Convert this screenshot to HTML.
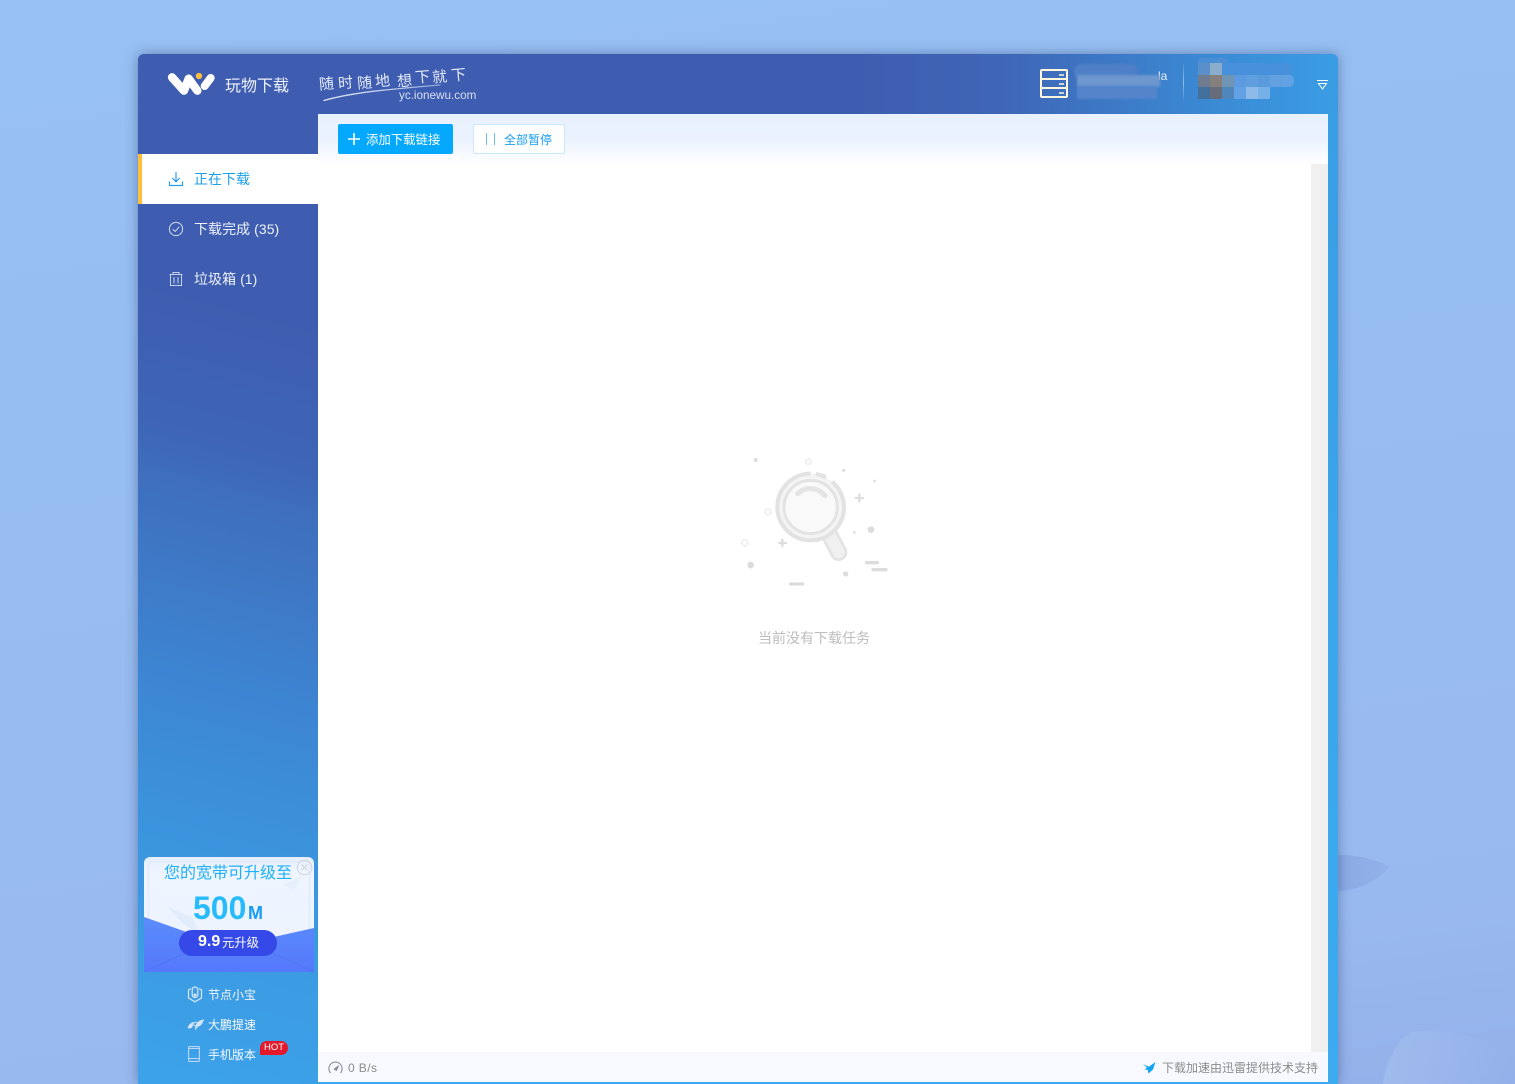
<!DOCTYPE html>
<html lang="zh">
<head>
<meta charset="utf-8">
<title>玩物下载</title>
<style>
html,body{margin:0;padding:0;width:1515px;height:1084px;overflow:hidden}
body{position:relative;background:linear-gradient(172deg,#97c0f3 0%,#97bdf1 45%,#98b9ef 85%,#94b0ea 100%);font-family:"Liberation Sans","Noto Sans CJK SC",sans-serif;color:#fff}
.a{position:absolute;white-space:nowrap}
svg{position:absolute;display:block;overflow:visible}
#win{left:138px;top:54px;width:1200px;height:1030px;border-radius:6px 6px 0 0;background:#3ca8ee;box-shadow:0 0 12px rgba(50,70,120,.5);overflow:hidden}
.t{line-height:20px;height:20px}
.b{filter:blur(1px)}
.m{position:absolute;width:12px;height:12px}
</style>
</head>
<body>
<!-- background decoration -->
<svg style="left:0;top:0" width="1515" height="1084" viewBox="0 0 1515 1084">
  <defs>
    <linearGradient id="lf" x1="0" y1="0" x2="1" y2="0"><stop offset="0" stop-color="#8aa8e4"/><stop offset="1" stop-color="#93b2ea"/></linearGradient>
    <linearGradient id="cv" x1="0" y1="0" x2="1" y2="0"><stop offset="0" stop-color="#a5c0ee"/><stop offset="1" stop-color="#a0bbed" stop-opacity="0"/></linearGradient>
  </defs>
  <path d="M1338 855 C1360 855 1378 860 1390 867 C1378 880 1360 890 1338 891 Z" fill="url(#lf)"/>
  <path d="M1382 1084 C1388 1060 1396 1040 1412 1032 C1440 1028 1480 1032 1515 1060 L1515 1084 Z" fill="url(#cv)" opacity=".7"/>
  <path d="M1382 1084 C1386 1064 1392 1048 1402 1038" fill="none" stroke="#96b3ec" stroke-width="1.5"/>
</svg>

<div class="a" id="win">
  <div class="a" style="left:0;top:0;width:1200px;height:60px;background:linear-gradient(90deg,#3f5db0 0%,#3f5db0 60%,#3f66b6 72%,#3d70bf 77%,#3b85d0 87%,#3a9de4 100%)"></div>
  <div class="a" style="left:0;top:60px;width:180px;height:970px;background:linear-gradient(195deg,#3f5db0 0%,#3f5db0 21%,#3e65b6 35%,#3e6fbd 40%,#3d86d3 60%,#3b96de 76%,#3ca3ea 100%)"></div>
  <div class="a" style="left:1190px;top:60px;width:10px;height:970px;background:linear-gradient(#3a9ee5,#3cabf0)"></div>
</div>

<!-- logo -->
<svg style="left:160px;top:66px" width="60" height="36" viewBox="0 0 180 108">
  <path d="M36 34 L72 74 L86 38 L112 74" fill="none" stroke="#fff" stroke-width="25" stroke-linecap="round" stroke-linejoin="round"/>
  <path d="M134 60 L152 36" fill="none" stroke="#fff" stroke-width="24" stroke-linecap="round"/>
  <circle cx="117" cy="30" r="9.5" fill="#fdbe3a"/>
</svg>
<div class="a t" style="left:225px;top:75px;font-size:16px;line-height:21px;color:#eef2fb;padding-top:1px">玩物下载</div>

<!-- slogan -->
<svg style="left:310px;top:60px" width="180" height="50" viewBox="0 0 180 50">
  <defs><linearGradient id="sw" x1="0" y1="0" x2="1" y2="0"><stop offset="0" stop-color="#dde5f5"/><stop offset=".6" stop-color="#b9c8e8"/><stop offset="1" stop-color="#8fa6d8"/></linearGradient></defs>
  <g font-family="'WenQuanYi Zen Hei','Noto Sans CJK SC',sans-serif" font-size="15" fill="#e4ebf8">
    <text x="9" y="29" transform="rotate(-5 16 24)">随</text>
    <text x="28" y="28" transform="rotate(-5 35 22)">时</text>
    <text x="47" y="28" transform="rotate(-5 54 21)">随</text>
    <text x="65" y="26" transform="rotate(-5 72 20)">地</text>
    <text x="87" y="26" transform="rotate(-5 94 19)">想</text>
    <text x="105" y="22" transform="rotate(-5 112 16)">下</text>
    <text x="122" y="22" transform="rotate(-5 130 15)">就</text>
    <text x="141" y="20" transform="rotate(-5 148 14)">下</text>
  </g>
  <path d="M14 40.5 C40 33 70 30 130 25" fill="none" stroke="url(#sw)" stroke-width="1.3" stroke-linecap="round"/>
</svg>
<div class="a" style="left:399px;top:89px;font-size:11.7px;line-height:14px;color:#d5dff2">yc.ionewu.com</div>

<!-- server icon -->
<svg style="left:1040px;top:69px" width="28" height="29" viewBox="0 0 28 29">
  <rect x="1" y="1" width="26" height="27" rx="1" fill="none" stroke="#fff6dc" stroke-width="2"/>
  <path d="M1 10H27M1 19H27" stroke="#fff6dc" stroke-width="2"/>
  <path d="M19 6H24M19 15H24M19 24H24" stroke="#fff6dc" stroke-width="1.5"/>
</svg>

<!-- account (blurred) -->
<div class="a" style="left:1158px;top:68px;font-size:12px;line-height:16px;color:#eef">la</div>
<div class="a b" style="left:1074px;top:64px;width:64px;height:16px;border-radius:10px;background:#4f7fc6"></div>
<div class="a b" style="left:1077px;top:75px;width:83px;height:12px;background:#6d97ce"></div>
<div class="a b" style="left:1077px;top:86px;width:80px;height:13px;background:#5584cb"></div>
<div class="a" style="left:1183px;top:64px;width:1px;height:36px;background:linear-gradient(#ffffff10,#ffffff70,#ffffff10)"></div>
<!-- mosaic -->
<div class="a" style="left:1198px;top:58px;width:30px;height:8px;border-radius:6px;background:#4a8fd6"></div>
<div class="a" style="left:1222px;top:63px;width:70px;height:12px;border-radius:6px 6px 0 0;background:#4790db"></div>
<div class="m" style="left:1198px;top:63px;background:#5a8fca"></div>
<div class="m" style="left:1210px;top:63px;background:#8aaccd"></div>
<div class="m" style="left:1198px;top:75px;background:#6f7b8f"></div>
<div class="m" style="left:1210px;top:75px;background:#85807e"></div>
<div class="m" style="left:1222px;top:75px;background:#7094b4"></div>
<div class="m" style="left:1234px;top:75px;background:#5c9be0"></div>
<div class="m" style="left:1246px;top:75px;background:#5f9fe0"></div>
<div class="m" style="left:1258px;top:75px;background:#5a9bdd"></div>
<div class="m" style="left:1270px;top:75px;background:#62a0e0"></div>
<div class="m" style="left:1282px;top:75px;background:#62a2e2;border-radius:0 5px 5px 0"></div>
<div class="m" style="left:1198px;top:87px;background:#44709d"></div>
<div class="m" style="left:1210px;top:87px;background:#666c7a"></div>
<div class="m" style="left:1222px;top:87px;background:#4f87bd"></div>
<div class="m" style="left:1234px;top:87px;background:#62a2e4"></div>
<div class="m" style="left:1246px;top:87px;background:#8dbbe9"></div>
<div class="m" style="left:1258px;top:87px;background:#75b0e6"></div>
<!-- dropdown -->
<svg style="left:1317px;top:80px" width="11" height="11" viewBox="0 0 11 11">
  <path d="M0 .5H11" stroke="#fff" stroke-width="1"/>
  <path d="M1.5 3.5H9.5L5.5 9Z" fill="none" stroke="#fff" stroke-width="1"/>
</svg>

<!-- content -->
<div class="a" style="left:318px;top:114px;width:1010px;height:968px;background:#fff"></div>
<div class="a" style="left:318px;top:114px;width:1010px;height:50px;background:linear-gradient(#e9f1fe 0%,#ebf2fe 50%,#fff 100%)"></div>
<div class="a" style="left:1311px;top:164px;width:17px;height:888px;background:#f0f0f0"></div>
<div class="a" style="left:318px;top:1052px;width:1010px;height:30px;background:#f7f9fe"></div>

<!-- toolbar -->
<div class="a" style="left:338px;top:124px;width:115px;height:30px;background:#04a9ff;border-radius:2px"></div>
<svg style="left:348px;top:133px" width="12" height="12" viewBox="0 0 12 12"><path d="M6 0V12M0 6H12" stroke="#fff" stroke-width="1.6"/></svg>
<div class="a t" style="left:366px;top:130px;font-size:12.4px;color:#fff">添加下载链接</div>
<div class="a" style="left:473px;top:124px;width:90px;height:28px;background:#fff;border:1px solid #c6e9fe;border-radius:2px"></div>
<div class="a" style="left:486px;top:133px;width:1px;height:12px;background:#6cbdf0"></div>
<div class="a" style="left:494px;top:133px;width:1px;height:12px;background:#6cbdf0"></div>
<div class="a t" style="left:504px;top:130px;font-size:12px;color:#189cec">全部暂停</div>

<!-- sidebar menu -->
<div class="a" style="left:138px;top:154px;width:180px;height:50px;background:#fff"></div>
<div class="a" style="left:138px;top:154px;width:4px;height:50px;background:#fdbf3c"></div>
<svg style="left:168px;top:171px" width="16" height="16" viewBox="0 0 16 16" fill="none" stroke="#2aa0ec" stroke-width="1.2">
  <path d="M8 1V10.5M4.2 7L8 10.8L11.8 7M1.5 10.5V14.5H14.5V10.5"/>
</svg>
<div class="a t" style="left:194px;top:169px;font-size:14px;color:#1d9fee">正在下载</div>
<svg style="left:168px;top:221px" width="16" height="16" viewBox="0 0 16 16" fill="none" stroke="#d5deef" stroke-width="1">
  <circle cx="8" cy="8" r="6.6"/><path d="M4.8 8.3L7.2 10.4L11.2 5.8"/>
</svg>
<div class="a t" style="left:194px;top:219px;font-size:14px;color:#eef2fb;letter-spacing:.05px">下载完成 (35)</div>
<svg style="left:168px;top:271px" width="16" height="16" viewBox="0 0 16 16" fill="none" stroke="#c5d2ec" stroke-width="1">
  <path d="M1.5 3.5H14.5M5 3.5V1.5H11V3.5M2.5 3.5V14.5H13.5V3.5M6 6V12.5M10 6V12.5"/>
</svg>
<div class="a t" style="left:194px;top:269px;font-size:14px;color:#eef2fb;letter-spacing:.05px">垃圾箱 (1)</div>

<!-- promo card -->
<div class="a" style="left:144px;top:857px;width:170px;height:115px;border-radius:6px 6px 0 0;overflow:hidden;background:linear-gradient(#e6eefe,#eff5ff 14%,#edf2fe)">
  <svg style="left:0;top:0" width="170" height="115" viewBox="0 0 170 115">
    <rect x="4.5" y="4.5" width="161" height="100" rx="4" fill="none" stroke="#e2ebfc" stroke-width="1.5"/>
    <path d="M24 50L48 60L56 78L38 66Z" fill="#e0ecfc"/>
    <path d="M140 28L158 18L150 34Z" fill="#e6f0fd"/>
    <defs><linearGradient id="g1" x1="0" y1="0" x2="0" y2="1"><stop offset="0" stop-color="#5a8cfb"/><stop offset="1" stop-color="#5678fb"/></linearGradient></defs>
    <path d="M0 60L85 90L170 71V115H0Z" fill="url(#g1)"/>
    <path d="M0 115L50 92M170 115L120 92" stroke="#5074f2" stroke-width="1" fill="none"/>
  </svg>
</div>
<div class="a" style="left:164px;top:864px;font-size:16px;line-height:20px;color:#1fb0f8">您的宽带可升级至</div>
<div class="a" style="left:193px;top:889px;font-size:32px;line-height:38px;color:#28bbfc;font-weight:bold">500</div>
<div class="a" style="left:248px;top:903px;font-size:18px;line-height:20px;color:#169bf7;font-weight:bold">M</div>
<div class="a" style="left:179px;top:930px;width:98px;height:26px;border-radius:13px;background:#3548e8"></div>
<div class="a" style="left:198px;top:932px;font-size:16px;line-height:20px;font-weight:bold;color:#fff">9.9</div>
<div class="a" style="left:222px;top:933px;font-size:12.3px;line-height:20px;color:#fff">元升级</div>
<svg style="left:296px;top:859px" width="17" height="17" viewBox="0 0 17 17" fill="none" stroke="#cfd3da" stroke-width="1">
  <circle cx="8.5" cy="8.5" r="7.3"/><path d="M5.5 5.5L11.5 11.5M11.5 5.5L5.5 11.5"/>
</svg>

<!-- bottom links -->
<svg style="left:187px;top:986px" width="16" height="17" viewBox="0 0 16 17" fill="none" stroke="#dce8f8" stroke-width="1.2">
  <path d="M4 2.5L1.5 4V12L8 15.8L14.5 12V4L12 2.5"/>
  <rect x="5.2" y="1" width="5.6" height="10.5" rx="2.8"/>
  <circle cx="8" cy="9" r=".9" fill="#dce8f8"/>
</svg>
<div class="a t" style="left:208px;top:985px;font-size:12px;color:#f2f6fd">节点小宝</div>
<svg style="left:187px;top:1018px" width="18" height="13" viewBox="0 0 18 13" fill="#d6e5f8">
  <path d="M0.5 10C1.5 7 3.5 4.5 6.5 4L5.5 9C4 10.5 2 11 0.5 10Z"/>
  <path d="M8.5 12.5C7.5 9 9.5 4 13 2.5C14.8 1.8 16.5 1.4 17.5 1.5C16.8 2.2 16.5 3 16 3.8C15.5 6 13 8.8 11 8.5C10 9.8 9.2 11.2 8.5 12.5Z"/>
  <circle cx="8.5" cy="6" r="1.8" fill="none" stroke="#d6e5f8"/>
</svg>
<div class="a t" style="left:208px;top:1015px;font-size:12px;color:#f7f9fe">大鹏提速</div>
<svg style="left:188px;top:1046px" width="12" height="16" viewBox="0 0 12 16" fill="none" stroke="#bcd8f5" stroke-width="1.1">
  <rect x=".6" y=".6" width="10.8" height="14.8" rx="1"/><path d="M.6 12.5H11.4M.6 2.5H11.4"/>
</svg>
<div class="a t" style="left:208px;top:1045px;font-size:12px;color:#f7f9fe">手机版本</div>
<div class="a" style="left:260px;top:1041px;width:28px;height:14px;background:#e4182a;border-radius:7px 7px 7px 1px;font-size:9.5px;line-height:14px;text-align:center;color:#fff">HOT</div>

<!-- empty state -->
<svg style="left:720px;top:445px" width="190" height="210" viewBox="0 0 570 630">
  <g fill="#dcdcdc">
    <circle cx="107" cy="45" r="6"/><circle cx="371" cy="76" r="4.5"/><circle cx="464" cy="108" r="4"/>
    <circle cx="403" cy="262" r="4"/><circle cx="453" cy="254" r="10"/><circle cx="92" cy="360" r="10"/><circle cx="377" cy="387" r="8"/>
  </g>
  <g fill="none" stroke="#e6e6e6" stroke-width="5">
    <circle cx="265" cy="50" r="8" stroke-dasharray="4 2"/>
    <circle cx="144" cy="201" r="9" stroke-dasharray="4 2"/>
    <circle cx="74" cy="294" r="9" stroke-dasharray="4 2"/>
  </g>
  <path d="M418 148V170M407 159H429M187 284V304M177 294H198" stroke="#dedede" stroke-width="7" fill="none" stroke-linecap="round"/>
  <path d="M440 353H472M459 374H498M212 417H247" stroke="#dcdcdc" stroke-width="10" fill="none" stroke-linecap="round"/>
  <path d="M330 272L356 322" stroke="#e3e3e3" stroke-width="52" stroke-linecap="round" fill="none"/>
  <path d="M330 272L356 322" stroke="#f0f0f0" stroke-width="36" stroke-linecap="round" fill="none"/>
  <circle cx="272" cy="186" r="100" fill="#f4f4f4"/>
  <circle cx="272" cy="186" r="80" fill="#f9f9f9" stroke="#e3e3e3" stroke-width="9"/>
  <path d="M272 86A100 100 0 0 0 272 286A100 100 0 0 0 372 186A100 100 0 0 0 336 110" fill="none" stroke="#e2e2e2" stroke-width="12"/>
  <path d="M287 87A100 100 0 0 1 318 97" fill="none" stroke="#e2e2e2" stroke-width="12"/>
  <path d="M233 146C255 125 292 125 315 152" fill="none" stroke="#e4e4e4" stroke-width="15" stroke-linecap="round"/>
</svg>
<div class="a t" style="left:758px;top:628px;font-size:14px;color:#bdbdbd">当前没有下载任务</div>

<!-- status bar -->
<svg style="left:328px;top:1060px" width="15" height="15" viewBox="0 0 15 15" fill="none" stroke="#8a8f98" stroke-width="1.1">
  <path d="M2.5 13A6.6 6.6 0 1 1 12.5 13"/><path d="M6.3 9.2L10.5 5.8L8.4 10.4Z" fill="#8a8f98"/>
</svg>
<div class="a t" style="left:348px;top:1058px;font-size:12px;color:#8d8d8d;letter-spacing:.4px">0 B/s</div>
<svg style="left:1143px;top:1061px" width="13" height="13" viewBox="0 0 13 13" fill="#12a3f2">
  <path d="M0 3L5.8 5.8L12.5 1L10 8.5L5.5 12.5L4.6 8.8L1.8 8.6L3.8 6.4Z"/>
</svg>
<div class="a t" style="left:1162px;top:1058px;font-size:12px;color:#8c8c8c">下载加速由迅雷提供技术支持</div>
</body>
</html>
